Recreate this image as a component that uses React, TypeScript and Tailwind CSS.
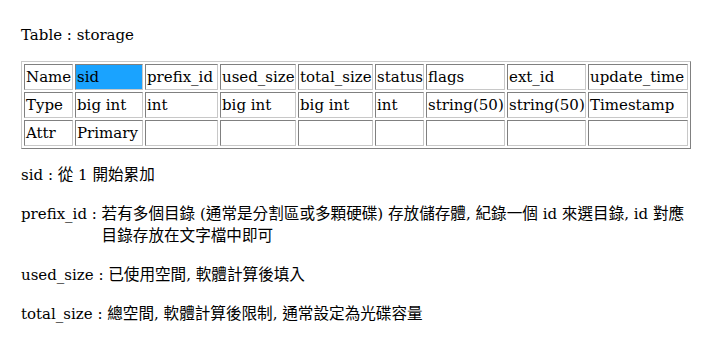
const COLS = [
  ['Name', 'Type', 'Attr'],
  ['sid', 'big int', 'Primary'],
  ['prefix_id', 'int', ''],
  ['used_size', 'big int', ''],
  ['total_size', 'big int', ''],
  ['status', 'int', ''],
  ['flags', 'string(50)', ''],
  ['ext_id', 'string(50)', ''],
  ['update_time', 'Timestamp', ''],
];

// largeur de chaque cellule, bordures comprises
const WIDTHS = ['w-[49px]', 'w-[68px]', 'w-[73px]', 'w-[76px]', 'w-[75px]', 'w-[49px]', 'w-[79px]', 'w-[79px]', 'w-[100px]'];

const NOTES: [string, string][] = [
  ['sid', '從 1 開始累加'],
  ['prefix_id', '若有多個目錄 (通常是分割區或多顆硬碟) 存放儲存體, 紀錄一個 id 來選目錄, id 對應目錄存放在文字檔中即可'],
  ['used_size', '已使用空間, 軟體計算後填入'],
  ['total_size', '總空間, 軟體計算後限制, 通常設定為光碟容量'],
];

// les idéogrammes sont un peu plus grands que le texte latin
function Mixed({ text }: { text: string }) {
  const parts = text.split(/([\u3400-\u9fff]+)/);
  return (
    <>
      {parts.map((p, i) =>
        i % 2 === 1 ? (
          <span key={i} className="text-[15.6px] leading-[22px]">
            {p}
          </span>
        ) : (
          p
        ),
      )}
    </>
  );
}

export default function App() {
  return (
    <div className="h-[360px] w-[720px] bg-white px-[21px] pt-[24px] text-[15px] leading-[22px] text-black [font-family:'DejaVu_Serif','Noto_Sans_CJK_TC',serif]">
      <p>Table : storage</p>

      <table className="mt-[15px] w-[670px] table-fixed border-separate border-spacing-[2px] border border-t-[#c8c8c8] border-l-[#c8c8c8] border-r-[#808080] border-b-[#808080]">
        <tbody>
          {[0, 1, 2].map((r) => (
            <tr key={r}>
              {COLS.map((col, c) => (
                <td
                  key={c}
                  className={
                    'h-[26px] overflow-visible border border-t-[#808080] border-l-[#808080] border-r-[#c8c8c8] border-b-[#c8c8c8] px-px py-0 align-middle whitespace-nowrap ' +
                    WIDTHS[c] +
                    (r === 0 && c === 1 ? ' bg-[#1aa3ff]' : '')
                  }
                >
                  {col[r]}
                </td>
              ))}
            </tr>
          ))}
        </tbody>
      </table>

      <div className="mt-[15px] flex flex-col gap-[17px]">
        {NOTES.map(([k, v]) => (
          <div key={k} className="flex">
            <span className="shrink-0 whitespace-pre">{k} : </span>
            <span className="w-[600px]">
              <Mixed text={v} />
            </span>
          </div>
        ))}
      </div>
    </div>
  );
}
